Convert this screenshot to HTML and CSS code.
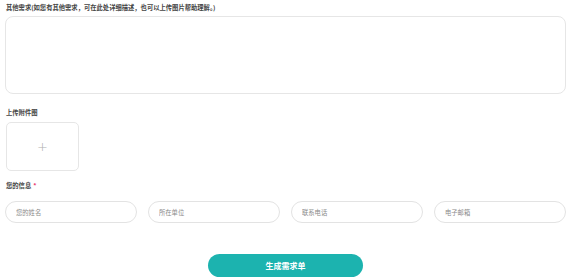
FILE: index.html
```html
<!DOCTYPE html>
<html lang="zh-CN">
<head>
<meta charset="utf-8">
<link rel="stylesheet" href="styles.css">
</head>
<body>
<div class="form">
  <div class="label first">其他需求(如您有其他需求，可在此处详细描述，也可以上传图片帮助理解。)</div>
  <textarea class="area"></textarea>
  <div class="label second">上传附件图</div>
  <div class="upload"><span class="plus">+</span></div>
  <div class="label third">您的信息<span class="req">*</span></div>
  <div class="fields">
    <input class="field" type="text" placeholder="您的姓名">
    <input class="field" type="text" placeholder="所在单位">
    <input class="field" type="text" placeholder="联系电话">
    <input class="field" type="text" placeholder="电子邮箱">
  </div>
  <div class="actions"><button class="submit">生成需求单</button></div>
</div>
</body>
</html>
```
FILE: styles.css
```css
* { box-sizing: border-box; }
html, body { margin: 0; padding: 0; background: #fff; }
body { font-family: "Noto Sans CJK SC", "Noto Sans", sans-serif; color: #333; }
.form { width: 561px; margin-left: 5px; display: flex; flex-direction: column; }
.label { font-size: 6.3px; line-height: 10px; height: 10px; font-weight: 700; color: #444; padding-left: 1px; }
.label.first { margin-top: 3px; }
.area { display: block; margin-top: 3px; width: 561px; height: 78px; border: 1px solid #e6e6e6; border-radius: 8px; resize: none; outline: none; background: #fff; }
.label.second { margin-top: 14px; }
.upload { margin-top: 4px; margin-left: 1px; width: 73px; height: 49px; border: 1px solid #e6e6e6; border-radius: 5px; display: flex; align-items: center; justify-content: center; }
.plus { font-size: 13px; font-weight: 300; color: #b0b0b0; line-height: 1; font-family: "DejaVu Sans", sans-serif; }
.label.third { margin-top: 10px; }
.req { color: #e8336b; margin-left: 2px; }
.fields { margin-top: 10px; display: grid; grid-template-columns: repeat(4, 1fr); column-gap: 11px; }
.field { height: 22px; width: 100%; border: 1px solid #e3e3e3; border-radius: 11px; padding: 0 0 0 10px; font-family: inherit; font-size: 6.3px; color: #333; outline: none; background: #fff; }
.field::placeholder { color: #8a8a8a; }
.actions { margin-top: 31px; display: flex; justify-content: center; }
.submit { width: 155px; height: 23px; border: none; border-radius: 12px; background: #1cb3af; color: #fff; font-family: inherit; font-size: 8px; font-weight: 700; padding: 0; }
```
